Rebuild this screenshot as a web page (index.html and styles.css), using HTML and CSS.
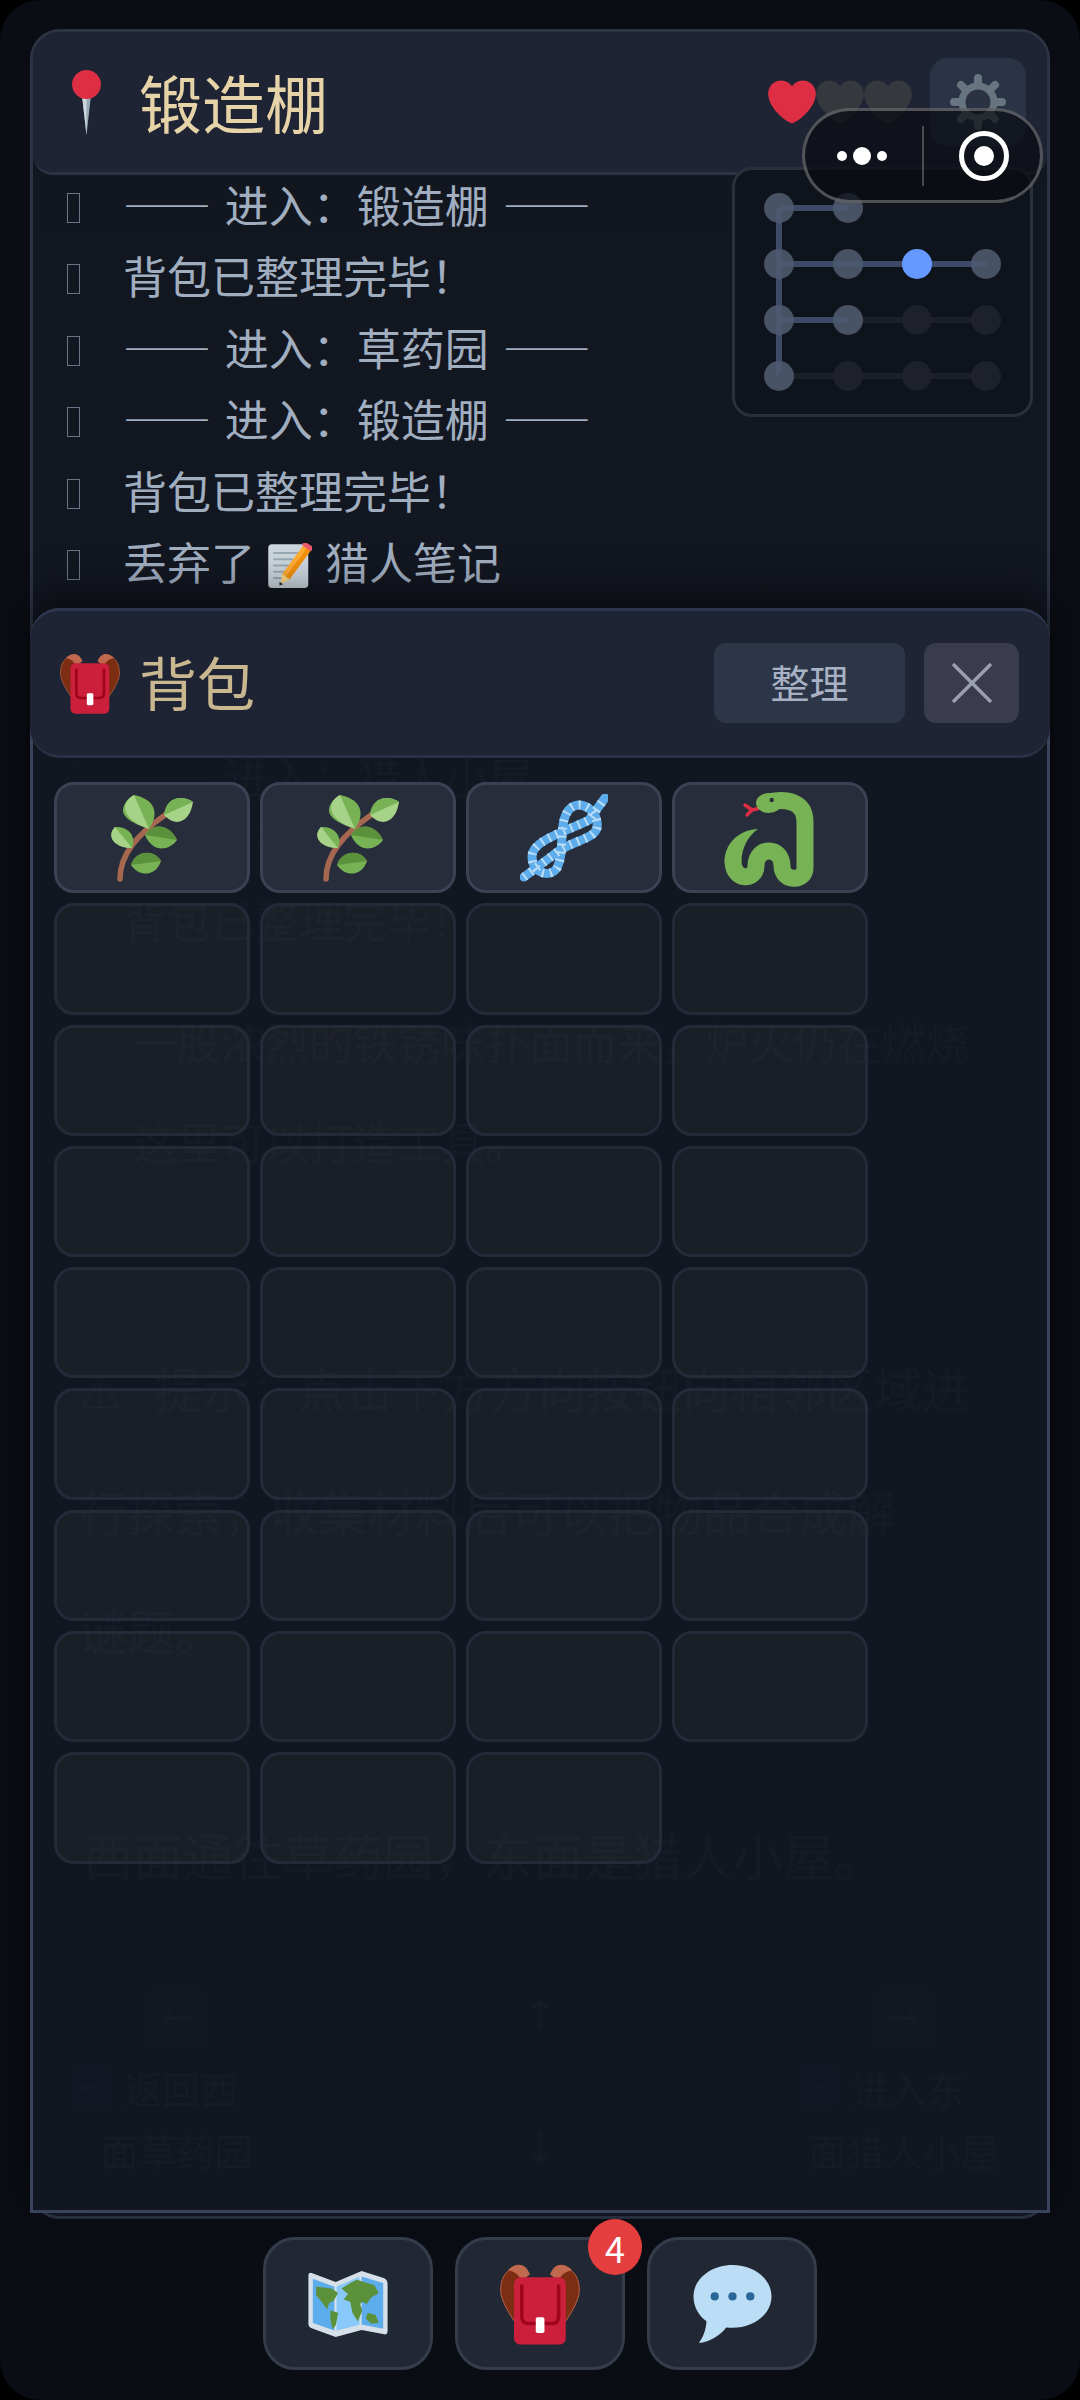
FILE: index.html
```html
<!DOCTYPE html>
<html lang="zh-CN">
<head>
    <meta charset="UTF-8">
    <meta name="viewport" content="width=device-width, initial-scale=1.0">
    <title>锻造棚</title>
    <link rel="stylesheet" href="styles.css">
</head>
<body>
    <svg class="defs" width="0" height="0">
        <symbol id="ic-pin" viewBox="0 0 36 36">
            <path fill="#99aab5" d="M15.4 13h5.200L18 36z"/>
            <path fill="#ccd6dd" d="M15.4 13H18v23z"/>
            <circle fill="#dd2e44" cx="18" cy="8" r="8"/>
        </symbol>
        <symbol id="ic-heart" viewBox="0 0 36 36">
            <path d="M35.885 11.833c0-5.45-4.418-9.868-9.867-9.868-3.308 0-6.227 1.633-8.018 4.129-1.791-2.496-4.71-4.129-8.017-4.129-5.45 0-9.868 4.417-9.868 9.868 0 .772.098 1.52.266 2.241C1.751 22.587 11.216 31.568 18 34.034c6.783-2.466 16.249-11.447 17.617-19.959.17-.721.268-1.469.268-2.242z"/>
        </symbol>
        <symbol id="ic-gear" viewBox="0 0 56 58">
            <g stroke="#66757f" stroke-linecap="round" fill="none">
                <circle cx="28" cy="29" r="15" stroke-width="9"/>
                <path stroke-width="8" d="M28 5v48M4 29h48M11 12l34 34M45 12L11 46"/>
            </g>
            <circle cx="28" cy="29" r="12.5" fill="#2a3244"/>
        </symbol>
        <symbol id="ic-bag" viewBox="0 0 36 37">
            <path fill="#7c2d12" stroke="#c1694f" stroke-width=".4" d="M12 6C10 3 8 2 6 2.500 2 4 .3 8 .3 12.500.3 17 4 23 7.500 28z"/>
            <path fill="#7c2d12" stroke="#c1694f" stroke-width=".4" d="M24 6c2-3 4-4 6-3.500 4 1.500 5.700 5.500 5.700 10 0 4.500-3.700 10.500-7.200 15.500z"/>
            <path fill="#c1694f" d="M3.500 3.500C7 0 11.500 0 13.500 5.500L9.500 8C8.500 5.500 6.500 4 3.500 3.500z"/>
            <path fill="#c1694f" d="M32.500 3.500C29 0 24.500 0 22.500 5.500L26.500 8c1-2.500 3-4 6-4.500z"/>
            <rect fill="#cc1f3c" x="6.300" y="6.700" width="23.300" height="30.300" rx="3"/>
            <path fill="none" stroke="#a0041e" stroke-width="1.600" d="M9.800 10v14.500q0 3 3 3h10.600q3 0 3-3V10"/>
            <rect fill="#fff" x="16.100" y="24.700" width="3.900" height="7.100" rx=".8"/>
        </symbol>
        <symbol id="ic-herb" viewBox="0 0 88 88">
            <path fill="none" stroke="#a5674f" stroke-width="5.500" stroke-linecap="round" d="M12 85C12 60 30 40 57 21"/>
            <path fill="#77b255" d="M26 1C50 6 50 22 41 35 26 30 14 24 15 15 16 9 20 5 26 1z"/>
            <path fill="#a6d388" d="M26 1C14 7 10 24 41 35z"/>
            <path fill="#a6d388" d="M85 8C82 28 68 34 56 21 58 4 74 0 85 8z"/>
            <path fill="#77b255" d="M85 8C72 0 58 4 56 21z"/>
            <path fill="#77b255" d="M7 33C20 32 29 42 24 54 6 54-2 42 7 33z"/>
            <path fill="#a6d388" d="M7 33C-2 42 6 54 24 54z"/>
            <path fill="#77b255" d="M37 41C44 58 60 58 69 46 62 30 44 28 37 41z"/>
            <path fill="#5c913b" d="M37 41C44 28 62 30 69 46z"/>
            <path fill="#77b255" d="M23 71C32 84 48 82 53 67 46 55 28 56 23 71z"/>
            <path fill="#5c913b" d="M23 71C28 56 46 55 53 67z"/>
        </symbol>
        <symbol id="ic-knot" viewBox="0 0 88 88">
            <g fill="none" stroke-width="9" stroke-linecap="round">
                <path stroke="#5dadec" d="M4 83L40 56C60 44 80 44 77 28 74 10 50 2 44 26 40 42 44 60 37 74 30 84 12 80 12 62 12 46 50 36 69 26L85 4"/>
                <path stroke="#bbddf5" stroke-linecap="butt" stroke-dasharray="2 6" d="M4 83L40 56C60 44 80 44 77 28 74 10 50 2 44 26 40 42 44 60 37 74 30 84 12 80 12 62 12 46 50 36 69 26L85 4"/>
            </g>
        </symbol>
        <symbol id="ic-snake" viewBox="0 0 88 88" overflow="visible">
            <path fill="none" stroke="#dd2e44" stroke-width="3.500" stroke-linecap="round" d="M34 14l-8 2-7-5m7 5l-5 5"/>
            <path fill="none" stroke="#77b255" stroke-width="17" stroke-linecap="round" d="M42 8C62 4 79 8 79 28v46c0 14-23 14-23-2 0-20-26-20-26 0 0 14-22 16-23-4"/>
            <path fill="#77b255" d="M-1.500 68C-1.500 50 12 36 32 35 22 42 15.500 54 15.500 68z"/>
            <ellipse fill="#77b255" cx="43" cy="9" rx="13" ry="10"/>
            <circle fill="#292f33" cx="45.700" cy="6" r="2.200"/>
        </symbol>
        <symbol id="ic-memo" viewBox="0 0 36 36">
            <rect fill="#ccd6dd" x="1" y="1" width="32" height="35" rx="3"/>
            <path stroke="#99aab5" stroke-width="1.500" d="M5 8h20M5 13h16M5 18h13M5 23h10M5 28h8"/>
            <path fill="#ffac33" d="M29 2l6 4-17 23-6-4z"/>
            <path fill="#f4900c" d="M32 4l3 2-17 23-3-2z"/>
            <path fill="#ea596e" d="M28 .5l3-1 5 3 .5 3-1.500 1-6.500-4.500z"/>
            <path fill="#ffd983" d="M12 25l6 4-7 4z"/>
            <path fill="#292f33" d="M10 31l3 2-3 1z"/>
        </symbol>
        <symbol id="ic-map" viewBox="0 0 36 30">
            <path fill="#d5e0e8" d="M1.500.900L12.400 5 24.200 0l10.300 3.300Q36 4 36 6v21q0 2-1.500 1.800l-10.300-2-11.800 3.200L1.500 26Q0 25.400 0 24V2q0-1.700 1.500-1.100z"/>
            <path fill="#5dadec" d="M2 3.500l9.800 3.700v19.900L2 23.600z"/>
            <path fill="#88c9f9" d="M12.800 7l10.400-4.400v21.800l-10.400 2.800z"/>
            <path fill="#5dadec" d="M24.200 2.500L34 5.500v20.700l-9.800-1.900z"/>
            <path fill="#5c913b" d="M3.500 7l7 1 3 2-2 3.500-2 1-1 3-2.500-3.500-2.500-3z"/>
            <path fill="#5c913b" d="M10 18l3.500 1-1 5.500-1.500 2-1-4.500z"/>
            <path fill="#5c913b" d="M15 8l4-2.500 3-1.500 8 2.500 2 3.500-3.500 2-2 3-2-1-1 1 1 3-2 5-2.500-4-1-5-3-1 2-2.500z"/>
            <path fill="#5c913b" d="M27 19l3.500 1 1.500 3.500-3.500.5-2.500-2.500z"/>
        </symbol>
        <symbol id="ic-chat" viewBox="0 0 36 36">
            <path fill="#bbddf5" d="M18 0c10 0 18 6.500 18 14.500S28 29 18 29c-1 0-2 0-2.900-.1C12 33 7 35.700 2.500 36 4.500 33.500 5.800 29.700 6 26 2.300 23.300 0 19.100 0 14.500 0 6.500 8 0 18 0z"/>
            <circle fill="#2a6797" cx="9.800" cy="14.500" r="1.900"/>
            <circle fill="#2a6797" cx="18" cy="14.500" r="1.900"/>
            <circle fill="#2a6797" cx="26.200" cy="14.500" r="1.900"/>
        </symbol>
    </svg>

    <div class="app">
        <div class="panel">
            <header class="top">
                <svg class="pin"><use href="#ic-pin"/></svg>
                <h1 class="place">锻造棚</h1>
                <div class="hearts">
                    <svg class="heart"><use href="#ic-heart"/></svg>
                    <svg class="heart off"><use href="#ic-heart"/></svg>
                    <svg class="heart off"><use href="#ic-heart"/></svg>
                </div>
                <div class="gear"><svg class="gear-icon"><use href="#ic-gear"/></svg></div>
            </header>

            <div class="log">
                <div class="log-row"><i class="tofu"></i><span class="log-text">—— 进入&#xFF1A;锻造棚 ——</span></div>
                <div class="log-row"><i class="tofu"></i><span class="log-text">背包已整理完毕&#xFF01;</span></div>
                <div class="log-row"><i class="tofu"></i><span class="log-text">—— 进入&#xFF1A;草药园 ——</span></div>
                <div class="log-row"><i class="tofu"></i><span class="log-text">—— 进入&#xFF1A;锻造棚 ——</span></div>
                <div class="log-row"><i class="tofu"></i><span class="log-text">背包已整理完毕&#xFF01;</span></div>
                <div class="log-row"><i class="tofu"></i><span class="log-text">丢弃了<svg class="memo"><use href="#ic-memo"/></svg>猎人笔记</span></div>
                <div class="log-row"><i class="tofu"></i><span class="log-text">背包已整理完毕&#xFF01;</span></div>
                <div class="log-row"><i class="tofu"></i><span class="log-text">—— 进入&#xFF1A;草药园 ——</span></div>
                <div class="log-row"><i class="tofu"></i><span class="log-text">—— 进入&#xFF1A;猎人小屋 ——</span></div>
                <div class="log-row"><i class="tofu"></i><span class="log-text">丢弃了猎人笔记</span></div>
                <div class="log-row"><i class="tofu"></i><span class="log-text">背包已整理完毕&#xFF01;</span></div>
            </div>

            <div class="scene">
                <p class="scene-a">一股浓烈的铁锈味扑面而来&#xFF0C;炉火仍在燃烧</p>
                <p class="scene-a">这里可以打造工具&#x3002;</p>
                <p class="scene-b"><b class="tip">⚠</b>提示&#xFF1A;点击下方方向按钮向相邻区域进<br>行探索&#xFF0C;收集材料后可以把物品合成解<br>谜题&#x3002;</p>
                <p class="scene-c">西面通往草药园&#xFF0C;东面是猎人小屋&#x3002;</p>
            </div>

            <nav class="moves">
                <div class="move">
                    <span class="arrow">←</span>
                    <div class="move-name"><span class="arrow-sm">←</span>返回西</div>
                    <div class="move-to">面草药园</div>
                </div>
                <div class="move-mid">
                    <span class="arrow">↑</span>
                    <span class="arrow">↓</span>
                </div>
                <div class="move">
                    <span class="arrow">→</span>
                    <div class="move-name"><span class="arrow-sm">→</span>进入东</div>
                    <div class="move-to">面猎人小屋</div>
                </div>
            </nav>
        </div>

        <div class="minimap">
            <svg viewBox="0 0 295 244" width="295" height="244">
                <path class="line" d="M44 38V206M44 38H113M44 94H251M44 150H113"/>
                <path class="line dim" d="M113 150H251M44 206H251"/>
                <g class="node">
                    <circle cx="44" cy="38" r="15"/><circle cx="113" cy="38" r="15"/>
                    <circle cx="44" cy="94" r="15"/><circle cx="113" cy="94" r="15"/><circle cx="251" cy="94" r="15"/>
                    <circle cx="44" cy="150" r="15"/><circle cx="113" cy="150" r="15"/>
                    <circle cx="44" cy="206" r="15"/>
                </g>
                <g class="node dim">
                    <circle cx="182" cy="150" r="15"/><circle cx="251" cy="150" r="15"/>
                    <circle cx="113" cy="206" r="15"/><circle cx="182" cy="206" r="15"/><circle cx="251" cy="206" r="15"/>
                </g>
                <circle class="node-now" cx="182" cy="94" r="15"/>
            </svg>
        </div>

        <section class="bag">
            <div class="bag-head">
                <svg class="bag-icon"><use href="#ic-bag"/></svg>
                <h2 class="bag-title">背包</h2>
                <button class="btn-sort">整理</button>
                <button class="btn-close">
                    <svg width="40" height="40" viewBox="0 0 40 40"><path d="M1 1l38 38M39 1L1 39"/></svg>
                </button>
            </div>
            <div class="slots">
                <div class="slot full"><svg class="item"><use href="#ic-herb"/></svg></div>
                <div class="slot full"><svg class="item"><use href="#ic-herb"/></svg></div>
                <div class="slot full"><svg class="item"><use href="#ic-knot"/></svg></div>
                <div class="slot full"><svg class="item"><use href="#ic-snake"/></svg></div>
                <div class="slot"></div><div class="slot"></div><div class="slot"></div><div class="slot"></div>
                <div class="slot"></div><div class="slot"></div><div class="slot"></div><div class="slot"></div>
                <div class="slot"></div><div class="slot"></div><div class="slot"></div><div class="slot"></div>
                <div class="slot"></div><div class="slot"></div><div class="slot"></div><div class="slot"></div>
                <div class="slot"></div><div class="slot"></div><div class="slot"></div><div class="slot"></div>
                <div class="slot"></div><div class="slot"></div><div class="slot"></div><div class="slot"></div>
                <div class="slot"></div><div class="slot"></div><div class="slot"></div><div class="slot"></div>
                <div class="slot"></div><div class="slot"></div><div class="slot"></div>
            </div>
        </section>

        <div class="capsule">
            <div class="capsule-dots"><i></i><i class="big"></i><i></i></div>
            <div class="capsule-line"></div>
            <div class="capsule-ring"><i></i></div>
        </div>

        <footer class="dock">
            <div class="dock-btn"><svg class="dock-map"><use href="#ic-map"/></svg></div>
            <div class="dock-btn">
                <svg class="dock-bag"><use href="#ic-bag"/></svg>
                <span class="badge">4</span>
            </div>
            <div class="dock-btn"><svg class="dock-chat"><use href="#ic-chat"/></svg></div>
        </footer>
    </div>
</body>
</html>
```

FILE: styles.css
```css
html, body {
    margin: 0;
    background: #000;
}
.defs {
    position: absolute;
}
.app {
    position: relative;
    height: 2400px;
    padding: 29px 30px 0;
    box-sizing: border-box;
    border-radius: 40px;
    background: #0a0d14;
    overflow: hidden;
    font-family: "Noto Sans CJK SC", "Noto Sans", sans-serif;
    color: #a0aec0;
}

/* main panel */
.panel {
    height: 2190px;
    box-sizing: border-box;
    border: 3px solid #2c3344;
    border-radius: 30px;
    background: linear-gradient(#12161f, #141925);
    overflow: hidden;
}
.top {
    display: flex;
    align-items: center;
    height: 143px;
    padding: 0 21px;
    box-sizing: border-box;
    border-bottom: 3px solid #2c3344;
    border-radius: 0 0 20px 20px;
    background: #1e2433;
}
.pin {
    width: 65px;
    height: 65px;
}
.place {
    margin: 0 0 4px 20px;
    font-size: 63px;
    font-weight: 400;
    color: #e6d3a8;
}
.hearts {
    display: flex;
    margin-left: auto;
    margin-right: 18px;
}
.heart {
    width: 48px;
    height: 48px;
    fill: #dd2e44;
}
.heart.off {
    fill: #35383d;
}
.gear {
    display: flex;
    align-items: center;
    justify-content: center;
    width: 96px;
    height: 88px;
    border-radius: 18px;
    background: #2b3346;
}
.gear-icon {
    width: 56px;
    height: 58px;
}

/* log */
.log {
    margin-top: -3px;
}
.log-row {
    display: flex;
    align-items: center;
    height: 71.5px;
    padding-left: 34px;
    font-size: 44px;
    white-space: nowrap;
}
.log-text {
    padding-bottom: 8px;
    word-spacing: 4px;
}
.tofu {
    width: 13px;
    height: 30px;
    box-sizing: border-box;
    margin-right: 43px;
    border: 1.5px solid #6b7588;
}
.memo {
    width: 45px;
    height: 45px;
    margin: 0 13px 0 12px;
    vertical-align: -8px;
}

/* scene text, sits behind the bag */
.scene p {
    margin: 0;
    padding-left: 100px;
    font-size: 44px;
    line-height: 100px;
    white-space: nowrap;
}
.scene {
    margin-top: 32px;
}
.scene .scene-b {
    margin-top: 137px;
    padding-left: 46px;
    font-size: 48px;
    line-height: 119px;
}
.tip {
    margin-right: 32px;
    font-family: "DejaVu Sans", sans-serif;
    font-weight: 400;
}
.scene .scene-c {
    margin-top: 130px;
    padding-left: 50px;
    font-size: 50px;
    line-height: 70px;
}

/* move cards */
.moves {
    display: flex;
    justify-content: space-between;
    margin-top: 58px;
    padding: 0 27px;
}
.move {
    display: flex;
    flex-direction: column;
    align-items: center;
    width: 233px;
    height: 264px;
    box-sizing: border-box;
    padding-top: 39px;
    border: 2px solid #2a3040;
    border-radius: 30px;
    font-size: 38px;
}
.move-mid {
    display: flex;
    flex-direction: column;
    gap: 75px;
    padding-top: 39px;
}
.arrow {
    display: flex;
    align-items: center;
    justify-content: center;
    width: 55px;
    height: 58px;
    background: #2b3a66;
    font-family: "DejaVu Sans", sans-serif;
    font-size: 40px;
}
.move-mid .arrow {
    background: none;
}
.move-name {
    display: flex;
    align-items: center;
    align-self: flex-start;
    gap: 14px;
    margin: 14px 0 0 11px;
}
.arrow-sm {
    display: flex;
    align-items: center;
    justify-content: center;
    width: 37px;
    height: 40px;
    background: #2b4a80;
    font-family: "DejaVu Sans", sans-serif;
    font-size: 26px;
}
.move-to {
    margin-top: 7px;
}

/* map */
.minimap {
    position: absolute;
    left: 732px;
    top: 167px;
    width: 301px;
    height: 250px;
    box-sizing: border-box;
    border: 3px solid #2a2f3c;
    border-radius: 20px;
    background: #0f131c;
}
.minimap svg {
    display: block;
}
.line {
    fill: none;
    stroke: #3d4a68;
    stroke-width: 6;
}
.line.dim {
    stroke: #1c2029;
}
.node {
    fill: #4f5b70;
    opacity: .88;
}
.node.dim {
    fill: #20232b;
}
.node-now {
    fill: #6699ff;
}

/* bag overlay */
.bag {
    position: absolute;
    left: 30px;
    top: 608px;
    width: 1020px;
    height: 1605px;
    box-sizing: border-box;
    border: 3px solid #39445c;
    border-top: 0;
    border-radius: 30px 30px 0 0;
    background: rgba(18, 22, 33, .98);
    box-shadow: 0 -14px 40px rgba(0, 0, 0, .55);
}
.bag-head {
    display: flex;
    align-items: center;
    height: 150px;
    margin: 0 -3px;
    padding: 0 31px 0 30px;
    box-sizing: border-box;
    border-top: 3px solid #2f3750;
    border-bottom: 3px solid #2a3144;
    border-radius: 30px;
    background: #1e2433;
}
.bag-icon {
    width: 60px;
    height: 64px;
}
.bag-title {
    margin: 0 0 4px 19px;
    font-size: 58px;
    font-weight: 400;
    color: #c9b78f;
}
.btn-sort, .btn-close {
    display: flex;
    align-items: center;
    justify-content: center;
    height: 80px;
    padding: 0;
    border: 0;
    border-radius: 12px;
    font-family: inherit;
}
.btn-sort {
    width: 191px;
    margin-left: auto;
    padding-bottom: 4px;
    background: #2d3648;
    font-size: 39px;
    color: #a8b2c4;
}
.btn-close {
    width: 95px;
    margin-left: 19px;
    background: #3a3b4c;
}
.btn-close path {
    fill: none;
    stroke: #9a9eae;
    stroke-width: 3.5;
}
.slots {
    display: grid;
    grid-template-columns: repeat(4, 196px);
    grid-auto-rows: 111.3px;
    gap: 10px;
    padding: 24px 21px 0;
}
.slot {
    display: flex;
    align-items: center;
    justify-content: center;
    box-sizing: border-box;
    border: 3px solid #262a38;
    border-radius: 20px;
    background: rgba(255, 255, 255, .035);
}
.slot.full {
    border-color: #3a4254;
    background: #272d3b;
}
.item {
    width: 88px;
    height: 88px;
    overflow: visible;
}

/* wechat capsule */
.capsule {
    position: absolute;
    left: 802px;
    top: 108px;
    display: flex;
    align-items: center;
    width: 241px;
    height: 95px;
    box-sizing: border-box;
    border: 3px solid rgba(255, 255, 255, .28);
    border-radius: 48px;
    background: rgba(9, 11, 16, .7);
}
.capsule-dots {
    display: flex;
    align-items: center;
    justify-content: center;
    gap: 6px;
    width: 113px;
    margin-right: 4px;
}
.capsule-dots i {
    width: 10px;
    height: 10px;
    border-radius: 50%;
    background: #fff;
}
.capsule-dots i.big {
    width: 18px;
    height: 18px;
}
.capsule-line {
    width: 2px;
    height: 60px;
    background: rgba(255, 255, 255, .25);
}
.capsule-ring {
    display: flex;
    align-items: center;
    justify-content: center;
    width: 50px;
    height: 50px;
    box-sizing: border-box;
    margin-left: 35px;
    border: 5px solid #fff;
    border-radius: 50%;
}
.capsule-ring i {
    width: 20px;
    height: 20px;
    border-radius: 50%;
    background: #fff;
}

/* bottom dock */
.dock {
    display: flex;
    justify-content: center;
    gap: 22px;
    margin-top: 18px;
}
.dock-btn {
    position: relative;
    display: flex;
    align-items: center;
    justify-content: center;
    width: 170px;
    height: 133px;
    box-sizing: border-box;
    border: 3px solid #353c4c;
    border-radius: 32px;
    background: #212733;
}
.dock-map {
    width: 80px;
    height: 66px;
}
.dock-bag {
    width: 80px;
    height: 83px;
}
.dock-chat {
    width: 79px;
    height: 78px;
}
.badge {
    position: absolute;
    top: -21px;
    right: -20px;
    width: 54px;
    height: 56px;
    border-radius: 50%;
    background: #e53e3e;
    font-size: 36px;
    line-height: 56px;
    text-align: center;
    color: #fff;
}
```
